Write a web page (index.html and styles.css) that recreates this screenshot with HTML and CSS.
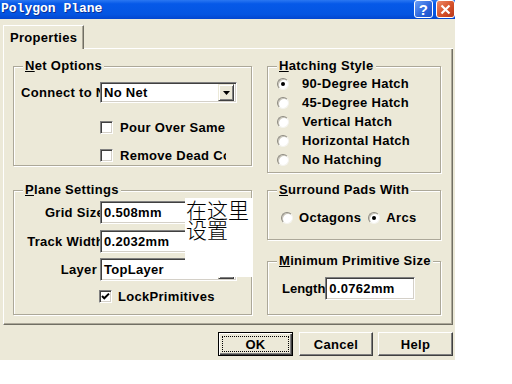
FILE: index.html
```html
<!DOCTYPE html>
<html>
<head>
<meta charset="utf-8">
<link rel="stylesheet" href="styles.css">
</head>
<body>
<div class="dialog">
  <div class="titlebar">
    <span class="title">Polygon Plane</span>
    <div class="tb-btns">
      <span class="tb help">?</span>
      <span class="tb close"><svg width="11" height="11" viewBox="0 0 11 11"><path d="M1.5 1.5 L9.5 9.5 M9.5 1.5 L1.5 9.5" stroke="#fff" stroke-width="2.2" fill="none"/></svg></span>
    </div>
  </div>
  <div class="content">
    <div class="tabs">
      <div class="tab">Properties</div>
      <div class="tabfill"></div>
    </div>
    <div class="panel">
      <div class="col col-left">
        <fieldset class="grp grp-net">
          <legend><u>N</u>et Options</legend>
          <div class="row row-connect">
            <span class="lbl-left">Connect to Net</span>
            <div class="combo combo-net"><span class="val">No Net</span><span class="ddbtn"><svg width="7" height="4" viewBox="0 0 7 4"><polygon points="0,0 7,0 3.5,4" fill="#000"/></svg></span></div>
          </div>
          <div class="chkrow chk-first"><span class="chk"></span><span class="chktxt">Pour Over Same Net</span></div>
          <div class="chkrow chk-second"><span class="chk"></span><span class="chktxt">Remove Dead Copper</span></div>
        </fieldset>
        <fieldset class="grp grp-plane">
          <legend><u>P</u>lane Settings</legend>
          <div class="row row-grid">
            <span class="lbl-right"><span class="over">Grid Size</span></span>
            <div class="field field-plane"><span class="val">0.508mm</span></div>
          </div>
          <div class="row row-track">
            <span class="lbl-right"><span class="over">Track Width</span></span>
            <div class="field field-plane"><span class="val">0.2032mm</span></div>
          </div>
          <div class="row row-layer">
            <span class="lbl-right"><span class="under">Layer</span></span>
            <div class="combo combo-layer"><span class="val">TopLayer</span><span class="ddbtn"><svg width="7" height="4" viewBox="0 0 7 4"><polygon points="0,0 7,0 3.5,4" fill="#000"/></svg></span></div>
          </div>
          <div class="chkrow chk-lock"><span class="chk"><svg width="9" height="9" viewBox="0 0 9 9"><path d="M1 4 L3.3 6.3 L8 1.6" stroke="#000" stroke-width="2" fill="none"/></svg></span><span class="chktxt">LockPrimitives</span></div>
        </fieldset>
      </div>
      <div class="col col-right">
        <fieldset class="grp grp-hatch">
          <legend><u>H</u>atching Style</legend>
          <div class="radrow first"><span class="radio on"></span><span>90-Degree Hatch</span></div>
          <div class="radrow"><span class="radio"></span><span>45-Degree Hatch</span></div>
          <div class="radrow"><span class="radio"></span><span>Vertical Hatch</span></div>
          <div class="radrow"><span class="radio"></span><span>Horizontal Hatch</span></div>
          <div class="radrow"><span class="radio"></span><span>No Hatching</span></div>
        </fieldset>
        <fieldset class="grp grp-pads">
          <legend><u>S</u>urround Pads With</legend>
          <div class="padrow">
            <span class="radio"></span><span class="padtxt">Octagons</span>
            <span class="radio on radio-arcs"></span><span class="padtxt">Arcs</span>
          </div>
        </fieldset>
        <fieldset class="grp grp-min">
          <legend><u>M</u>inimum Primitive Size</legend>
          <div class="row row-length">
            <span class="lbl-len">Length</span>
            <div class="field field-len"><span class="val">0.0762mm</span></div>
          </div>
        </fieldset>
      </div>
    </div>
    <div class="buttons">
      <div class="btn btn-ok"><span class="focus">OK</span></div>
      <div class="btn btn-cancel">Cancel</div>
      <div class="btn btn-help">Help</div>
    </div>
  </div>
  <div class="note">在这里<br>设置</div>
</div>
</body>
</html>
```
FILE: styles.css
```css
* { box-sizing: border-box; }
html, body { margin: 0; padding: 0; background: #fff; }
body { font: bold 13px/15px "Liberation Sans", Arial, sans-serif; color: #000; letter-spacing: 0.3px; }

.dialog {
  width: 455px; height: 360px; background: #ece9d8;
  display: flex; flex-direction: column; position: relative;
}

.titlebar {
  height: 19px; flex: none;
  background: linear-gradient(#2a77f2, #0659e8 20%, #0455e2 75%, #0346cf);
  display: flex; justify-content: space-between; align-items: flex-start;
}
.title {
  font: bold 13px/18px "Liberation Mono", "Courier New", monospace;
  color: #fff; padding-left: 1px; text-shadow: 1px 1px #0b2f95; letter-spacing: 0;
}
.tb-btns { display: flex; gap: 3px; }
.tb {
  width: 19px; height: 18px; border: 1px solid #fff; border-radius: 3px;
  display: flex; align-items: center; justify-content: center;
  color: #fff; font: bold 15px/1 "Liberation Sans", sans-serif;
}
.tb.help { background: linear-gradient(135deg, #6a9ff6, #2b63db 60%, #1c4fc6); }
.tb.close { background: linear-gradient(135deg, #ee8a68, #d5512a 55%, #b8371a); }

.content { flex: 1; padding: 6px 2px 0 3px; display: flex; flex-direction: column; }

.tabs { display: flex; height: 24px; flex: none; }
.tab {
  width: 81px; height: 24px; padding: 3px 0 0 6px;
  border-left: 1px solid #fff; border-top: 1px solid #fff;
  border-right: 1px solid #716f64;
  box-shadow: inset -1px 0 #aca899;
  line-height: 17px;
}
.tabfill { flex: 1; border-bottom: 1px solid #fff; }

.panel {
  height: 276px; flex: none;
  border-left: 1px solid #fff; border-right: 1px solid #716f64; border-bottom: 1px solid #716f64;
  box-shadow: inset -1px -1px #aca899;
  padding: 10px 0 0 9px;
  display: flex; gap: 15px;
}
.col { display: flex; flex-direction: column; }
.col-left { width: 239px; gap: 17px; }
.col-right { width: 174px; }

.grp {
  margin: 0; padding: 0 0 0 8px; min-width: 0;
  border: 1px solid #aca899;
  box-shadow: inset 1px 1px #fff, 1px 1px #fff;
}
.grp legend {
  padding: 0 2px; margin-left: 1px; line-height: 14px;
  background: #ece9d8; white-space: nowrap;
}
.grp-net { height: 107px; }
.grp-plane { height: 132px; }
.grp-hatch { height: 114px; }
.grp-pads { height: 57px; margin-top: 10px; }
.grp-min { height: 61px; margin-top: 14px; }

.row { display: flex; align-items: center; }
.row-connect { margin: 9px 0 0 -1px; height: 21px; }
.lbl-left { width: 79px; overflow: hidden; white-space: nowrap; }

.combo, .field {
  background: #fff; display: flex; align-items: center;
  border: 1px solid; border-color: #808080 #fff #fff #808080;
  box-shadow: inset 1px 1px #404040, inset -1px -1px #d4d0c8;
  padding: 0 2px 0 3px; white-space: nowrap; overflow: hidden;
}
.combo .val, .field .val { flex: 1; }
.combo-net { width: 137px; height: 21px; }
.ddbtn {
  width: 16px; height: 17px; flex: none; background: #ece9d8;
  border: 1px solid; border-color: #ece9d8 #404040 #404040 #ece9d8;
  box-shadow: inset 1px 1px #fff, inset -1px -1px #808080;
  display: flex; align-items: center; justify-content: center;
}

.chkrow { display: flex; align-items: center; height: 15px; white-space: nowrap; overflow: hidden; }
.chk-first { margin: 17px 0 0 78px; width: 125px; }
.chk-second { margin: 13px 0 0 78px; width: 126px; }
.chk-lock { margin: 8px 0 0 77px; }
.chk {
  width: 13px; height: 13px; flex: none; background: #fff;
  border: 1px solid; border-color: #808080 #fff #fff #808080;
  box-shadow: inset 1px 1px #404040, inset -1px -1px #d4d0c8;
  display: flex; align-items: center; justify-content: center;
  margin-right: 7px;
}
.chk-lock .chk { margin-right: 6px; }

.lbl-right { width: 78px; overflow: hidden; display: flex; justify-content: flex-end; white-space: nowrap; }
.lbl-right span { flex: none; }
.lbl-right .over { margin-right: -4px; }
.lbl-right .under { margin-right: 3px; }
.row-grid { margin-top: 4px; }
.row-track { margin-top: 6px; }
.row-layer { margin-top: 5px; }
.field-plane { width: 137px; height: 23px; }
.combo-layer { width: 137px; height: 23px; }
.combo-layer .ddbtn { height: 19px; }

.radrow { display: flex; align-items: center; height: 19px; white-space: nowrap; }
.radrow.first { margin-top: 1px; }
.radrow .radio { margin: 0 13px 0 1px; }
.radio {
  width: 12px; height: 12px; flex: none; border-radius: 50%; background: #fff;
  border: 1px solid; border-color: #8d8a80 #f4f3ee #f4f3ee #8d8a80;
  box-shadow: inset 1px 1px #c8c5b8;
  display: flex; align-items: center; justify-content: center;
}
.radio.on::after { content: ""; width: 4px; height: 4px; border-radius: 50%; background: #000; }

.padrow { display: flex; align-items: center; height: 19px; margin: 11px 0 0 5px; white-space: nowrap; }
.padtxt { margin-left: 6px; }
.radio-arcs { margin-left: 7px; }

.row-length { margin: 9px 0 0 6px; }
.lbl-len { margin-right: 0; letter-spacing: 0; }
.field-len { width: 90px; height: 23px; }

.buttons { display: flex; justify-content: flex-end; margin-top: 7px; }
.btn {
  height: 24px; display: flex; align-items: center; justify-content: center;
  border: 1px solid; border-color: #fff #404040 #404040 #fff;
  box-shadow: inset -1px -1px #808080;
}
.btn-ok { width: 75px; border-color: #000; box-shadow: inset 1px 1px #fff, inset -1px -1px #404040, inset -2px -2px #808080; padding: 3px; }
.btn-ok .focus { flex: 1; align-self: stretch; border: 1px dotted #000; display: flex; align-items: center; justify-content: center; }
.btn-cancel { width: 74px; margin-left: 6px; }
.btn-help { width: 75px; margin-left: 5px; }

.note {
  position: absolute; left: 185px; top: 198px; width: 68px; height: 79px;
  background: #fff; padding: 1px 0 0 1px; letter-spacing: 0;
  font: 300 21px/20px "Noto Sans CJK SC", sans-serif; color: #000;
}
```
